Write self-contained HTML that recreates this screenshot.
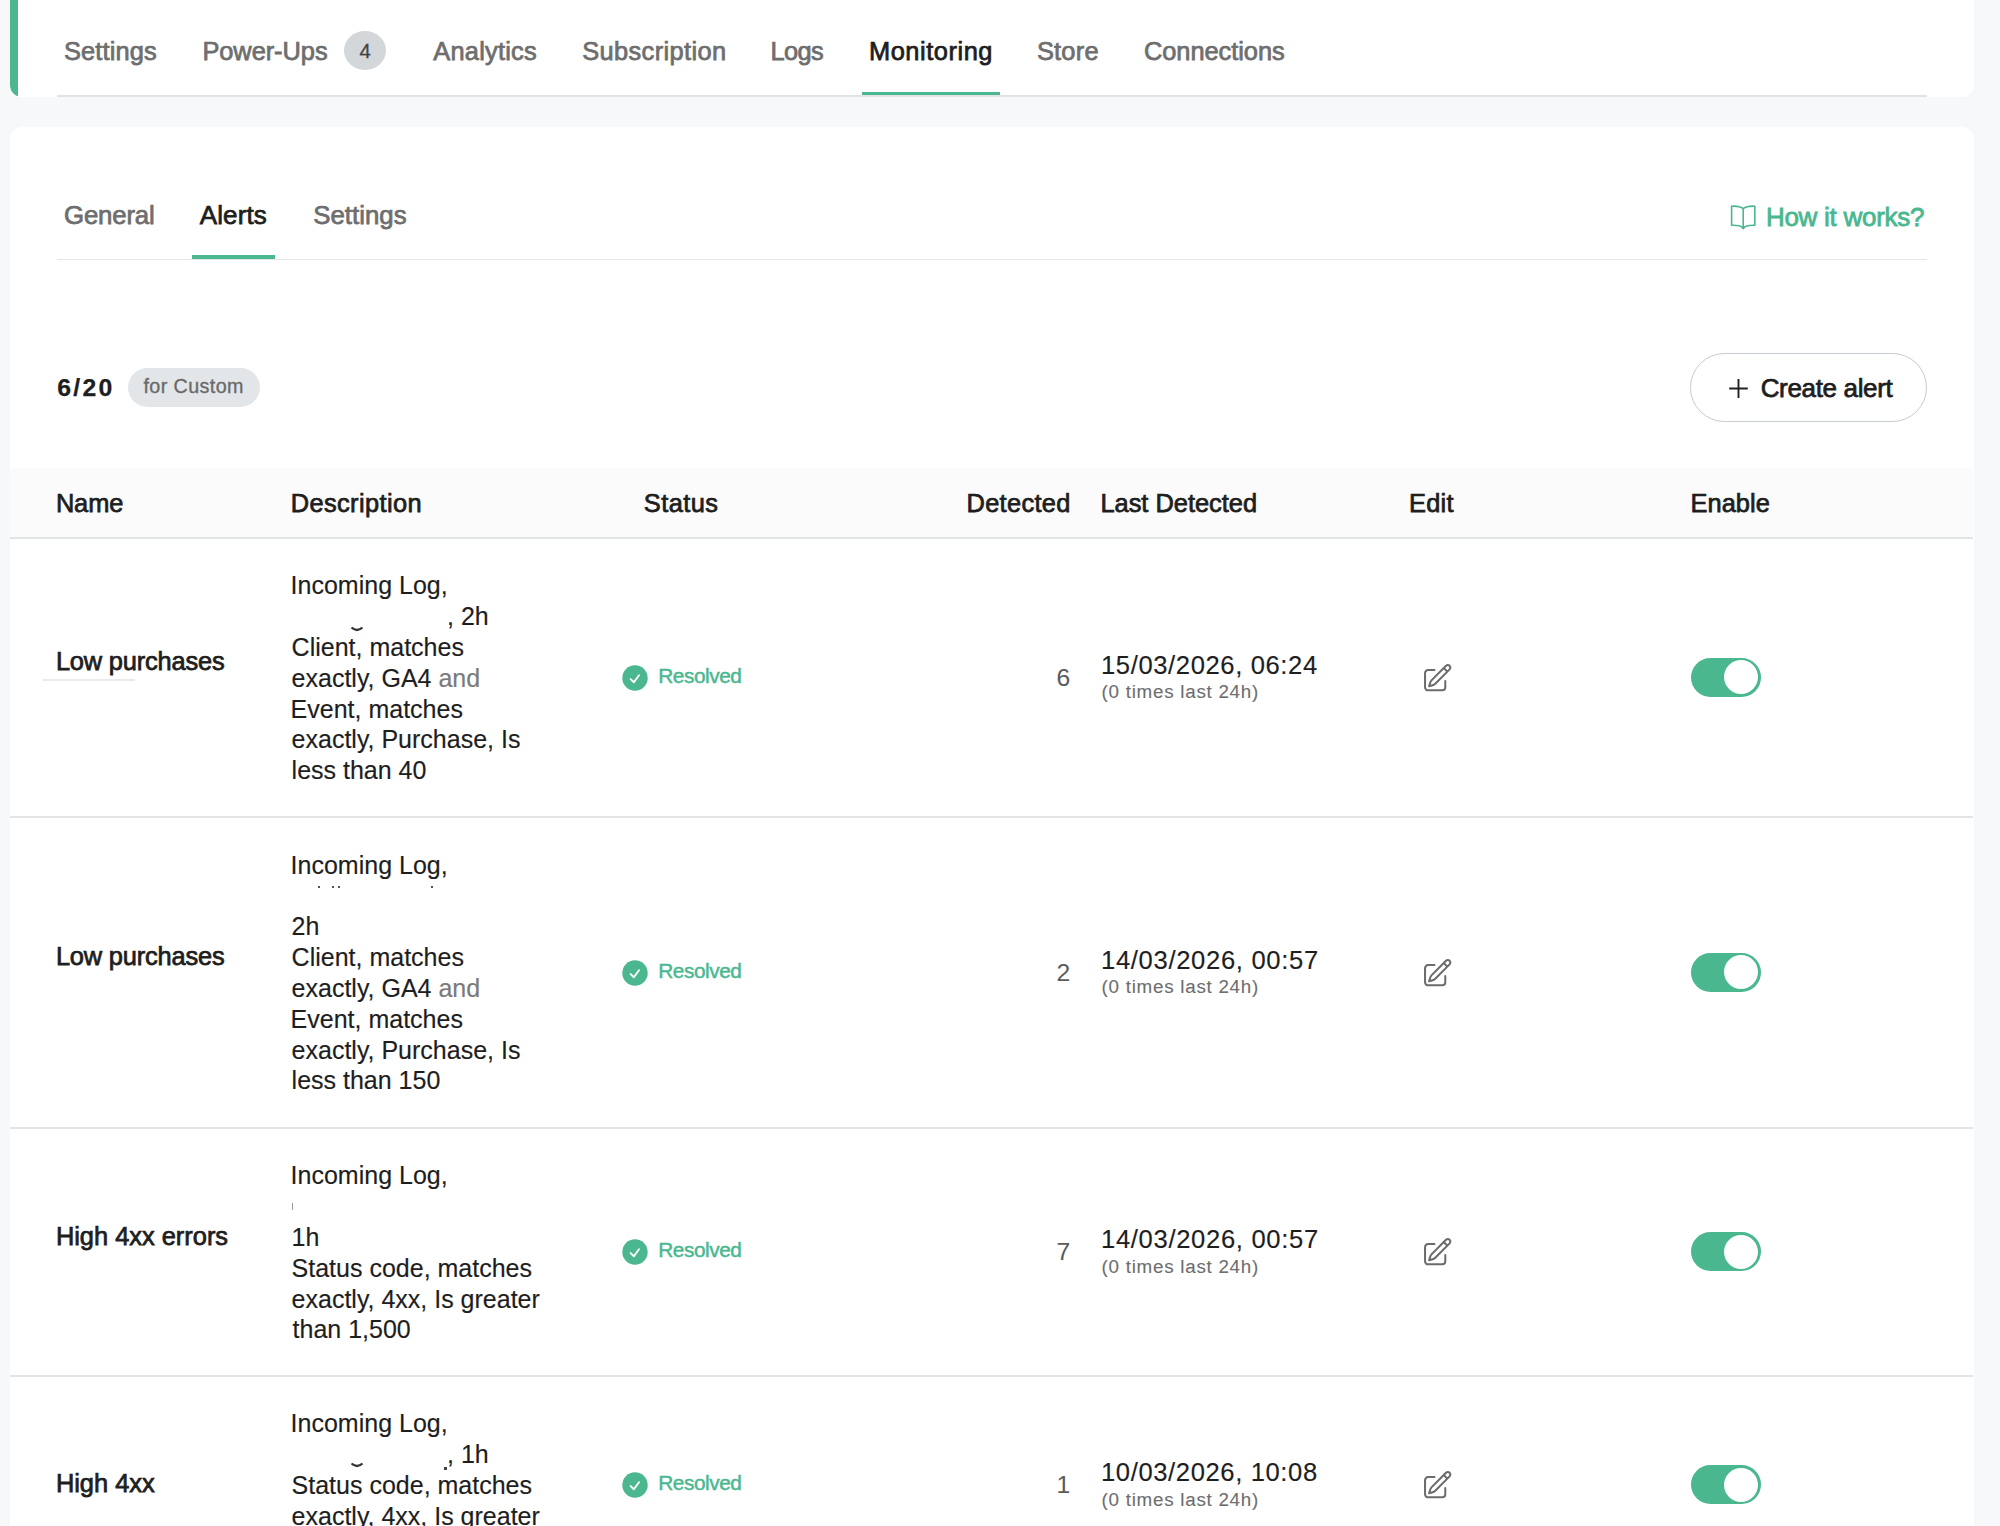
<!DOCTYPE html>
<html><head><meta charset="utf-8"><style>
html,body{margin:0;padding:0;width:2000px;height:1526px;overflow:hidden;background:#f7f8fa;font-family:"Liberation Sans",sans-serif}
.t{position:absolute;white-space:pre}
svg{overflow:visible}
</style></head><body>
<div style="position:absolute;left:10px;top:-20px;width:1963.5px;height:116.75px;background:#fff;border-radius:12px;overflow:hidden"><div style="position:absolute;left:0;top:0;width:8px;height:116px;background:#4ab78f"></div></div>
<div style="position:absolute;left:57px;top:95.2px;width:1870px;height:1.5px;background:#e1e4e6"></div>
<div style="position:absolute;left:862px;top:91.8px;width:137.5px;height:3.4px;background:#4ab78f;border-radius:0"></div>
<div style="position:absolute;left:10px;top:126.75px;width:1963.5px;height:1500px;background:#fff;border-radius:12px"></div>
<div style="position:absolute;left:57px;top:258.6px;width:1870px;height:1.2px;background:#e2e6e8"></div>
<div style="position:absolute;left:191.8px;top:255px;width:83.2px;height:3.6px;background:#4ab78f;border-radius:0"></div>
<div style="position:absolute;left:10px;top:467.5px;width:1963px;height:69px;background:#fbfbfb"></div>
<div style="position:absolute;left:10px;top:536.5px;width:1963px;height:2px;background:#e1e5e7"></div>
<div style="position:absolute;left:10px;top:816px;width:1963px;height:2px;background:#e1e5e7"></div>
<div style="position:absolute;left:10px;top:1126.5px;width:1963px;height:2px;background:#e1e5e7"></div>
<div style="position:absolute;left:10px;top:1374.5px;width:1963px;height:2px;background:#e1e5e7"></div>
<div style="position:absolute;left:344px;top:31.4px;width:42px;height:39px;border-radius:50%;background:#d3d7da"></div>
<svg style="position:absolute;left:1728px;top:202px" width="30" height="30" viewBox="0 0 30 30" fill="none" stroke="#4ab78f" stroke-width="1.6" stroke-linejoin="round">
<path d="M15.2 6.6 C12.5 4.6 8 3.9 3.6 4.2 L3.6 23.3 C8 23.1 12.5 23.8 15.2 25.6 Z"/>
<path d="M15.2 6.6 C17.9 4.6 22.4 3.9 26.8 4.2 L26.8 23.3 C22.4 23.1 17.9 23.8 15.2 25.6"/>
<path d="M13.6 25 L15.2 26.6 L16.8 25" />
</svg>
<div style="position:absolute;left:127.6px;top:367.7px;width:132px;height:39px;border-radius:20px;background:#e3e6e8"></div>
<div style="position:absolute;left:1690px;top:353px;width:236.5px;height:68.5px;box-sizing:border-box;border:1.5px solid #c5cbce;border-radius:35px;background:#fff"></div>
<svg style="position:absolute;left:1728px;top:378px" width="21" height="21" viewBox="0 0 21 21" stroke="#222" stroke-width="1.9"><path d="M10.5 1 V20 M1.2 10.5 H19.8"/></svg>
<svg style="position:absolute;left:622.4px;top:665.15px" width="26" height="26" viewBox="0 0 26 26"><circle cx="13" cy="13" r="12.7" fill="#4ab78f"/><path d="M8.6 14.1 L11.9 17.3 L17 10.2" fill="none" stroke="#fff" stroke-width="1.9" stroke-linecap="round" stroke-linejoin="round"/></svg>
<svg style="position:absolute;left:1421.15px;top:662.15px" width="32.4" height="32.4" viewBox="0 0 24 24" fill="none" stroke="#6b6b6b" stroke-width="1.5" stroke-linecap="round" stroke-linejoin="round"><path d="m16.862 4.487 1.687-1.688a1.875 1.875 0 1 1 2.652 2.652L10.582 16.07a4.5 4.5 0 0 1-1.897 1.13L6 18l.8-2.685a4.5 4.5 0 0 1 1.13-1.897l8.932-8.931Zm0 0L19.5 7.125M18 14v4.75A2.25 2.25 0 0 1 15.75 21H5.25A2.25 2.25 0 0 1 3 18.75V8.25A2.25 2.25 0 0 1 5.25 6H10"/></svg>
<div style="position:absolute;left:1691px;top:657.75px;width:70px;height:39px;border-radius:20px;background:#4ab78f"></div><div style="position:absolute;left:1723.7px;top:660.25px;width:34px;height:34px;border-radius:50%;background:#fff"></div>
<svg style="position:absolute;left:622.4px;top:960.15px" width="26" height="26" viewBox="0 0 26 26"><circle cx="13" cy="13" r="12.7" fill="#4ab78f"/><path d="M8.6 14.1 L11.9 17.3 L17 10.2" fill="none" stroke="#fff" stroke-width="1.9" stroke-linecap="round" stroke-linejoin="round"/></svg>
<svg style="position:absolute;left:1421.15px;top:957.15px" width="32.4" height="32.4" viewBox="0 0 24 24" fill="none" stroke="#6b6b6b" stroke-width="1.5" stroke-linecap="round" stroke-linejoin="round"><path d="m16.862 4.487 1.687-1.688a1.875 1.875 0 1 1 2.652 2.652L10.582 16.07a4.5 4.5 0 0 1-1.897 1.13L6 18l.8-2.685a4.5 4.5 0 0 1 1.13-1.897l8.932-8.931Zm0 0L19.5 7.125M18 14v4.75A2.25 2.25 0 0 1 15.75 21H5.25A2.25 2.25 0 0 1 3 18.75V8.25A2.25 2.25 0 0 1 5.25 6H10"/></svg>
<div style="position:absolute;left:1691px;top:952.75px;width:70px;height:39px;border-radius:20px;background:#4ab78f"></div><div style="position:absolute;left:1723.7px;top:955.25px;width:34px;height:34px;border-radius:50%;background:#fff"></div>
<svg style="position:absolute;left:622.4px;top:1239.4px" width="26" height="26" viewBox="0 0 26 26"><circle cx="13" cy="13" r="12.7" fill="#4ab78f"/><path d="M8.6 14.1 L11.9 17.3 L17 10.2" fill="none" stroke="#fff" stroke-width="1.9" stroke-linecap="round" stroke-linejoin="round"/></svg>
<svg style="position:absolute;left:1421.15px;top:1236.4px" width="32.4" height="32.4" viewBox="0 0 24 24" fill="none" stroke="#6b6b6b" stroke-width="1.5" stroke-linecap="round" stroke-linejoin="round"><path d="m16.862 4.487 1.687-1.688a1.875 1.875 0 1 1 2.652 2.652L10.582 16.07a4.5 4.5 0 0 1-1.897 1.13L6 18l.8-2.685a4.5 4.5 0 0 1 1.13-1.897l8.932-8.931Zm0 0L19.5 7.125M18 14v4.75A2.25 2.25 0 0 1 15.75 21H5.25A2.25 2.25 0 0 1 3 18.75V8.25A2.25 2.25 0 0 1 5.25 6H10"/></svg>
<div style="position:absolute;left:1691px;top:1232.0px;width:70px;height:39px;border-radius:20px;background:#4ab78f"></div><div style="position:absolute;left:1723.7px;top:1234.5px;width:34px;height:34px;border-radius:50%;background:#fff"></div>
<svg style="position:absolute;left:622.4px;top:1472.4px" width="26" height="26" viewBox="0 0 26 26"><circle cx="13" cy="13" r="12.7" fill="#4ab78f"/><path d="M8.6 14.1 L11.9 17.3 L17 10.2" fill="none" stroke="#fff" stroke-width="1.9" stroke-linecap="round" stroke-linejoin="round"/></svg>
<svg style="position:absolute;left:1421.15px;top:1469.4px" width="32.4" height="32.4" viewBox="0 0 24 24" fill="none" stroke="#6b6b6b" stroke-width="1.5" stroke-linecap="round" stroke-linejoin="round"><path d="m16.862 4.487 1.687-1.688a1.875 1.875 0 1 1 2.652 2.652L10.582 16.07a4.5 4.5 0 0 1-1.897 1.13L6 18l.8-2.685a4.5 4.5 0 0 1 1.13-1.897l8.932-8.931Zm0 0L19.5 7.125M18 14v4.75A2.25 2.25 0 0 1 15.75 21H5.25A2.25 2.25 0 0 1 3 18.75V8.25A2.25 2.25 0 0 1 5.25 6H10"/></svg>
<div style="position:absolute;left:1691px;top:1465.0px;width:70px;height:39px;border-radius:20px;background:#4ab78f"></div><div style="position:absolute;left:1723.7px;top:1467.5px;width:34px;height:34px;border-radius:50%;background:#fff"></div>
<div style="position:absolute;left:43px;top:679px;width:92px;height:2.2px;background:#e8eaec"></div>
<svg style="position:absolute;left:349px;top:624px" width="16" height="9" viewBox="0 0 16 9"><path d="M2.5 3.5 Q8 8.5 13.5 3.5" fill="none" stroke="#333" stroke-width="2.2"/></svg>
<svg style="position:absolute;left:349px;top:1460px" width="16" height="9" viewBox="0 0 16 9"><path d="M2.5 3.5 Q8 8.5 13.5 3.5" fill="none" stroke="#333" stroke-width="2.2"/></svg>
<div style="position:absolute;left:444px;top:1467px;width:2.5px;height:2.5px;background:#444"></div>
<div style="position:absolute;left:317.5px;top:886px;width:2px;height:2px;background:#555"></div>
<div style="position:absolute;left:331.5px;top:886px;width:2px;height:2px;background:#555"></div>
<div style="position:absolute;left:338px;top:886px;width:2px;height:2px;background:#555"></div>
<div style="position:absolute;left:430.5px;top:886px;width:2px;height:2px;background:#555"></div>
<div style="position:absolute;left:291.5px;top:1203px;width:1.2px;height:7px;background:#999"></div>
<div class="t" style="left:64.00px;top:39.49px;font-size:25.4px;line-height:25.4px;color:#6e6e6e;font-weight:400;letter-spacing:0.136px;-webkit-text-stroke:0.75px #6e6e6e">Settings</div>
<div class="t" style="left:202.40px;top:39.49px;font-size:25.4px;line-height:25.4px;color:#6e6e6e;font-weight:400;letter-spacing:-0.048px;-webkit-text-stroke:0.75px #6e6e6e">Power-Ups</div>
<div class="t" style="left:433.30px;top:39.49px;font-size:25.4px;line-height:25.4px;color:#6e6e6e;font-weight:400;letter-spacing:0.224px;-webkit-text-stroke:0.75px #6e6e6e">Analytics</div>
<div class="t" style="left:582.20px;top:39.49px;font-size:25.4px;line-height:25.4px;color:#6e6e6e;font-weight:400;letter-spacing:0.391px;-webkit-text-stroke:0.75px #6e6e6e">Subscription</div>
<div class="t" style="left:770.40px;top:39.49px;font-size:25.4px;line-height:25.4px;color:#6e6e6e;font-weight:400;letter-spacing:-0.588px;-webkit-text-stroke:0.75px #6e6e6e">Logs</div>
<div class="t" style="left:869.00px;top:39.49px;font-size:25.4px;line-height:25.4px;color:#1e1e1e;font-weight:400;letter-spacing:0.542px;-webkit-text-stroke:0.75px #1e1e1e">Monitoring</div>
<div class="t" style="left:1036.90px;top:39.49px;font-size:25.4px;line-height:25.4px;color:#6e6e6e;font-weight:400;letter-spacing:0.233px;-webkit-text-stroke:0.75px #6e6e6e">Store</div>
<div class="t" style="left:1144.00px;top:39.49px;font-size:25.4px;line-height:25.4px;color:#6e6e6e;font-weight:400;letter-spacing:-0.045px;-webkit-text-stroke:0.75px #6e6e6e">Connections</div>
<div class="t" style="left:359.50px;top:40.61px;font-size:20.3px;line-height:20.3px;color:#444;font-weight:400;-webkit-text-stroke:0.3px #444">4</div>
<div class="t" style="left:64.00px;top:202.66px;font-size:25.8px;line-height:25.8px;color:#6e6e6e;font-weight:400;letter-spacing:-0.174px;-webkit-text-stroke:0.75px #6e6e6e">General</div>
<div class="t" style="left:199.80px;top:202.39px;font-size:26px;line-height:26px;color:#1e1e1e;font-weight:400;letter-spacing:0.088px;-webkit-text-stroke:0.75px #1e1e1e">Alerts</div>
<div class="t" style="left:313.20px;top:202.66px;font-size:25.8px;line-height:25.8px;color:#6e6e6e;font-weight:400;letter-spacing:0.027px;-webkit-text-stroke:0.75px #6e6e6e">Settings</div>
<div class="t" style="left:1765.90px;top:204.09px;font-size:26px;line-height:26px;color:#4ab78f;font-weight:400;letter-spacing:-0.271px;-webkit-text-stroke:0.8px #4ab78f">How it works?</div>
<div class="t" style="left:57.20px;top:376.20px;font-size:24.8px;line-height:24.8px;color:#1e1e1e;font-weight:700;letter-spacing:2.310px;-webkit-text-stroke:0.25px #1e1e1e">6/20</div>
<div class="t" style="left:143.50px;top:377.22px;font-size:19.7px;line-height:19.7px;color:#6a6a6a;font-weight:400;letter-spacing:0.403px;-webkit-text-stroke:0.35px #6a6a6a">for Custom</div>
<div class="t" style="left:1760.70px;top:374.99px;font-size:26px;line-height:26px;color:#1e1e1e;font-weight:400;letter-spacing:-0.347px;-webkit-text-stroke:0.75px #1e1e1e">Create alert</div>
<div class="t" style="left:55.90px;top:490.99px;font-size:25.4px;line-height:25.4px;color:#1e1e1e;font-weight:400;letter-spacing:-0.103px;-webkit-text-stroke:0.75px #1e1e1e">Name</div>
<div class="t" style="left:290.70px;top:490.99px;font-size:25.4px;line-height:25.4px;color:#1e1e1e;font-weight:400;letter-spacing:0.392px;-webkit-text-stroke:0.75px #1e1e1e">Description</div>
<div class="t" style="left:643.80px;top:490.99px;font-size:25.4px;line-height:25.4px;color:#1e1e1e;font-weight:400;letter-spacing:0.443px;-webkit-text-stroke:0.75px #1e1e1e">Status</div>
<div class="t" style="left:966.50px;top:490.99px;font-size:25.4px;line-height:25.4px;color:#1e1e1e;font-weight:400;letter-spacing:0.314px;-webkit-text-stroke:0.75px #1e1e1e">Detected</div>
<div class="t" style="left:1100.40px;top:490.99px;font-size:25.4px;line-height:25.4px;color:#1e1e1e;font-weight:400;letter-spacing:0.004px;-webkit-text-stroke:0.75px #1e1e1e">Last Detected</div>
<div class="t" style="left:1409.00px;top:490.99px;font-size:25.4px;line-height:25.4px;color:#1e1e1e;font-weight:400;letter-spacing:0.234px;-webkit-text-stroke:0.75px #1e1e1e">Edit</div>
<div class="t" style="left:1690.50px;top:490.99px;font-size:25.4px;line-height:25.4px;color:#1e1e1e;font-weight:400;letter-spacing:0.052px;-webkit-text-stroke:0.75px #1e1e1e">Enable</div>
<div class="t" style="left:55.90px;top:649.44px;font-size:25.4px;line-height:25.4px;color:#1e1e1e;font-weight:400;letter-spacing:-0.174px;-webkit-text-stroke:0.75px #1e1e1e">Low purchases</div>
<div class="t" style="left:290.60px;top:573.33px;font-size:25px;line-height:25px;color:#1e1e1e;font-weight:400;-webkit-text-stroke:0.15px #1e1e1e">Incoming Log,</div>
<div class="t" style="left:291.60px;top:634.93px;font-size:25px;line-height:25px;color:#1e1e1e;font-weight:400;-webkit-text-stroke:0.15px #1e1e1e">Client, matches</div>
<div class="t" style="left:291.60px;top:665.73px;font-size:25px;line-height:25px;color:#1e1e1e;font-weight:400;-webkit-text-stroke:0.15px #1e1e1e">exactly, GA4 <span style="color:#7a7a7a;-webkit-text-stroke:0.15px #7a7a7a">and</span></div>
<div class="t" style="left:290.60px;top:696.53px;font-size:25px;line-height:25px;color:#1e1e1e;font-weight:400;-webkit-text-stroke:0.15px #1e1e1e">Event, matches</div>
<div class="t" style="left:291.60px;top:727.33px;font-size:25px;line-height:25px;color:#1e1e1e;font-weight:400;-webkit-text-stroke:0.15px #1e1e1e">exactly, Purchase, Is</div>
<div class="t" style="left:291.60px;top:758.13px;font-size:25px;line-height:25px;color:#1e1e1e;font-weight:400;-webkit-text-stroke:0.15px #1e1e1e">less than 40</div>
<div class="t" style="left:447.00px;top:604.13px;font-size:25px;line-height:25px;color:#1e1e1e;font-weight:400;-webkit-text-stroke:0.15px #1e1e1e">, 2h</div>
<div class="t" style="left:658.30px;top:666.24px;font-size:20.8px;line-height:20.8px;color:#4ab78f;font-weight:400;letter-spacing:-0.448px;-webkit-text-stroke:0.45px #4ab78f">Resolved</div>
<div class="t" style="left:1056.50px;top:666.14px;font-size:24.7px;line-height:24.7px;color:#5a5a5a;font-weight:400">6</div>
<div class="t" style="left:1101.00px;top:652.72px;font-size:25.6px;line-height:25.6px;color:#1e1e1e;font-weight:400;letter-spacing:0.611px;-webkit-text-stroke:0.15px #1e1e1e">15/03/2026, 06:24</div>
<div class="t" style="left:1101.60px;top:683.33px;font-size:18.8px;line-height:18.8px;color:#6e6e6e;font-weight:400;letter-spacing:0.742px;-webkit-text-stroke:0.1px #6e6e6e">(0 times last 24h)</div>
<div class="t" style="left:55.90px;top:944.44px;font-size:25.4px;line-height:25.4px;color:#1e1e1e;font-weight:400;letter-spacing:-0.174px;-webkit-text-stroke:0.75px #1e1e1e">Low purchases</div>
<div class="t" style="left:290.60px;top:852.83px;font-size:25px;line-height:25px;color:#1e1e1e;font-weight:400;-webkit-text-stroke:0.15px #1e1e1e">Incoming Log,</div>
<div class="t" style="left:291.60px;top:914.43px;font-size:25px;line-height:25px;color:#1e1e1e;font-weight:400;-webkit-text-stroke:0.15px #1e1e1e">2h</div>
<div class="t" style="left:291.60px;top:945.23px;font-size:25px;line-height:25px;color:#1e1e1e;font-weight:400;-webkit-text-stroke:0.15px #1e1e1e">Client, matches</div>
<div class="t" style="left:291.60px;top:976.03px;font-size:25px;line-height:25px;color:#1e1e1e;font-weight:400;-webkit-text-stroke:0.15px #1e1e1e">exactly, GA4 <span style="color:#7a7a7a;-webkit-text-stroke:0.15px #7a7a7a">and</span></div>
<div class="t" style="left:290.60px;top:1006.83px;font-size:25px;line-height:25px;color:#1e1e1e;font-weight:400;-webkit-text-stroke:0.15px #1e1e1e">Event, matches</div>
<div class="t" style="left:291.60px;top:1037.63px;font-size:25px;line-height:25px;color:#1e1e1e;font-weight:400;-webkit-text-stroke:0.15px #1e1e1e">exactly, Purchase, Is</div>
<div class="t" style="left:291.60px;top:1068.43px;font-size:25px;line-height:25px;color:#1e1e1e;font-weight:400;-webkit-text-stroke:0.15px #1e1e1e">less than 150</div>
<div class="t" style="left:658.30px;top:961.24px;font-size:20.8px;line-height:20.8px;color:#4ab78f;font-weight:400;letter-spacing:-0.448px;-webkit-text-stroke:0.45px #4ab78f">Resolved</div>
<div class="t" style="left:1056.50px;top:961.14px;font-size:24.7px;line-height:24.7px;color:#5a5a5a;font-weight:400">2</div>
<div class="t" style="left:1101.00px;top:947.72px;font-size:25.6px;line-height:25.6px;color:#1e1e1e;font-weight:400;letter-spacing:0.673px;-webkit-text-stroke:0.15px #1e1e1e">14/03/2026, 00:57</div>
<div class="t" style="left:1101.60px;top:978.33px;font-size:18.8px;line-height:18.8px;color:#6e6e6e;font-weight:400;letter-spacing:0.742px;-webkit-text-stroke:0.1px #6e6e6e">(0 times last 24h)</div>
<div class="t" style="left:55.90px;top:1223.69px;font-size:25.4px;line-height:25.4px;color:#1e1e1e;font-weight:400;-webkit-text-stroke:0.75px #1e1e1e">High 4xx errors</div>
<div class="t" style="left:290.60px;top:1163.33px;font-size:25px;line-height:25px;color:#1e1e1e;font-weight:400;-webkit-text-stroke:0.15px #1e1e1e">Incoming Log,</div>
<div class="t" style="left:291.60px;top:1224.93px;font-size:25px;line-height:25px;color:#1e1e1e;font-weight:400;-webkit-text-stroke:0.15px #1e1e1e">1h</div>
<div class="t" style="left:291.60px;top:1255.73px;font-size:25px;line-height:25px;color:#1e1e1e;font-weight:400;-webkit-text-stroke:0.15px #1e1e1e">Status code, matches</div>
<div class="t" style="left:291.60px;top:1286.53px;font-size:25px;line-height:25px;color:#1e1e1e;font-weight:400;-webkit-text-stroke:0.15px #1e1e1e">exactly, 4xx, Is greater</div>
<div class="t" style="left:292.60px;top:1317.33px;font-size:25px;line-height:25px;color:#1e1e1e;font-weight:400;-webkit-text-stroke:0.15px #1e1e1e">than 1,500</div>
<div class="t" style="left:658.30px;top:1240.49px;font-size:20.8px;line-height:20.8px;color:#4ab78f;font-weight:400;letter-spacing:-0.448px;-webkit-text-stroke:0.45px #4ab78f">Resolved</div>
<div class="t" style="left:1056.50px;top:1240.39px;font-size:24.7px;line-height:24.7px;color:#5a5a5a;font-weight:400">7</div>
<div class="t" style="left:1101.00px;top:1226.97px;font-size:25.6px;line-height:25.6px;color:#1e1e1e;font-weight:400;letter-spacing:0.673px;-webkit-text-stroke:0.15px #1e1e1e">14/03/2026, 00:57</div>
<div class="t" style="left:1101.60px;top:1257.58px;font-size:18.8px;line-height:18.8px;color:#6e6e6e;font-weight:400;letter-spacing:0.742px;-webkit-text-stroke:0.1px #6e6e6e">(0 times last 24h)</div>
<div class="t" style="left:55.90px;top:1471.49px;font-size:25.4px;line-height:25.4px;color:#1e1e1e;font-weight:400;-webkit-text-stroke:0.75px #1e1e1e">High 4xx</div>
<div class="t" style="left:290.60px;top:1411.33px;font-size:25px;line-height:25px;color:#1e1e1e;font-weight:400;-webkit-text-stroke:0.15px #1e1e1e">Incoming Log,</div>
<div class="t" style="left:291.60px;top:1472.93px;font-size:25px;line-height:25px;color:#1e1e1e;font-weight:400;-webkit-text-stroke:0.15px #1e1e1e">Status code, matches</div>
<div class="t" style="left:291.60px;top:1503.73px;font-size:25px;line-height:25px;color:#1e1e1e;font-weight:400;-webkit-text-stroke:0.15px #1e1e1e">exactly, 4xx, Is greater</div>
<div class="t" style="left:292.60px;top:1534.53px;font-size:25px;line-height:25px;color:#1e1e1e;font-weight:400;-webkit-text-stroke:0.15px #1e1e1e">than 1,500</div>
<div class="t" style="left:447.00px;top:1442.13px;font-size:25px;line-height:25px;color:#1e1e1e;font-weight:400;-webkit-text-stroke:0.15px #1e1e1e">, 1h</div>
<div class="t" style="left:658.30px;top:1473.49px;font-size:20.8px;line-height:20.8px;color:#4ab78f;font-weight:400;letter-spacing:-0.448px;-webkit-text-stroke:0.45px #4ab78f">Resolved</div>
<div class="t" style="left:1056.50px;top:1473.39px;font-size:24.7px;line-height:24.7px;color:#5a5a5a;font-weight:400">1</div>
<div class="t" style="left:1101.00px;top:1459.97px;font-size:25.6px;line-height:25.6px;color:#1e1e1e;font-weight:400;letter-spacing:0.611px;-webkit-text-stroke:0.15px #1e1e1e">10/03/2026, 10:08</div>
<div class="t" style="left:1101.60px;top:1490.58px;font-size:18.8px;line-height:18.8px;color:#6e6e6e;font-weight:400;letter-spacing:0.742px;-webkit-text-stroke:0.1px #6e6e6e">(0 times last 24h)</div>
</body></html>
